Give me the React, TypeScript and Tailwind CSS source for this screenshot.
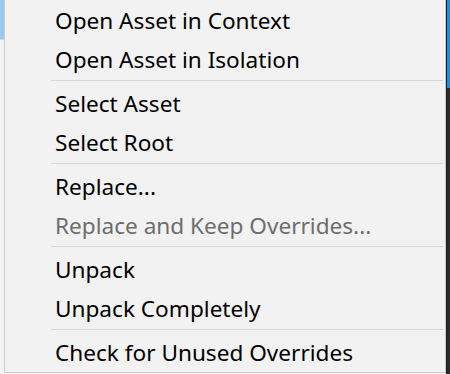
const GROUPS: { label: string; disabled?: boolean }[][] = [
  [{ label: 'Open Asset in Context' }, { label: 'Open Asset in Isolation' }],
  [{ label: 'Select Asset' }, { label: 'Select Root' }],
  [{ label: 'Replace...' }, { label: 'Replace and Keep Overrides...', disabled: true }],
  [{ label: 'Unpack' }, { label: 'Unpack Completely' }],
  [{ label: 'Check for Unused Overrides' }],
]

export default function App() {
  return (
    <div className="flex w-[450px] h-[374px] bg-[#f0f0f0] overflow-hidden">
      {/* left edge of the window behind */}
      <div className="flex flex-col w-[4px]">
        <div className="h-[39px] bg-[#99c9f3]" />
        <div className="h-px bg-[#d4d4d4]" />
        <div className="flex-1 bg-[#f3f3f3]" />
      </div>

      {/* context menu */}
      <div className="flex flex-col w-[442px] h-[373px] border-l border-r border-b border-[#cccccc] bg-[#f2f2f2] font-['Noto_Sans','Open_Sans',sans-serif] text-[22.6px] text-black">
        {GROUPS.map((group, gi) => (
          <div key={gi}>
            {gi > 0 && (
              <div className="h-[5px] flex items-center pl-[46px] pr-[2px]">
                <div className="h-px w-full bg-[#d7d7d7]" />
              </div>
            )}
            {group.map((item) => (
              <div
                key={item.label}
                className={`h-[39px] flex items-center pl-[50px] pt-[4px] leading-none whitespace-nowrap ${
                  item.disabled ? 'text-[#6d6d6d]' : ''
                }`}
              >
                {item.label}
              </div>
            ))}
          </div>
        ))}
      </div>

      {/* right edge of the window behind */}
      <div className="flex flex-col w-[4px] border-l border-[#1c1c1c]">
        <div className="h-[88px] bg-[#1f8fd6]" />
        <div className="flex-1 bg-[#2b2b2b]" />
      </div>
    </div>
  )
}
